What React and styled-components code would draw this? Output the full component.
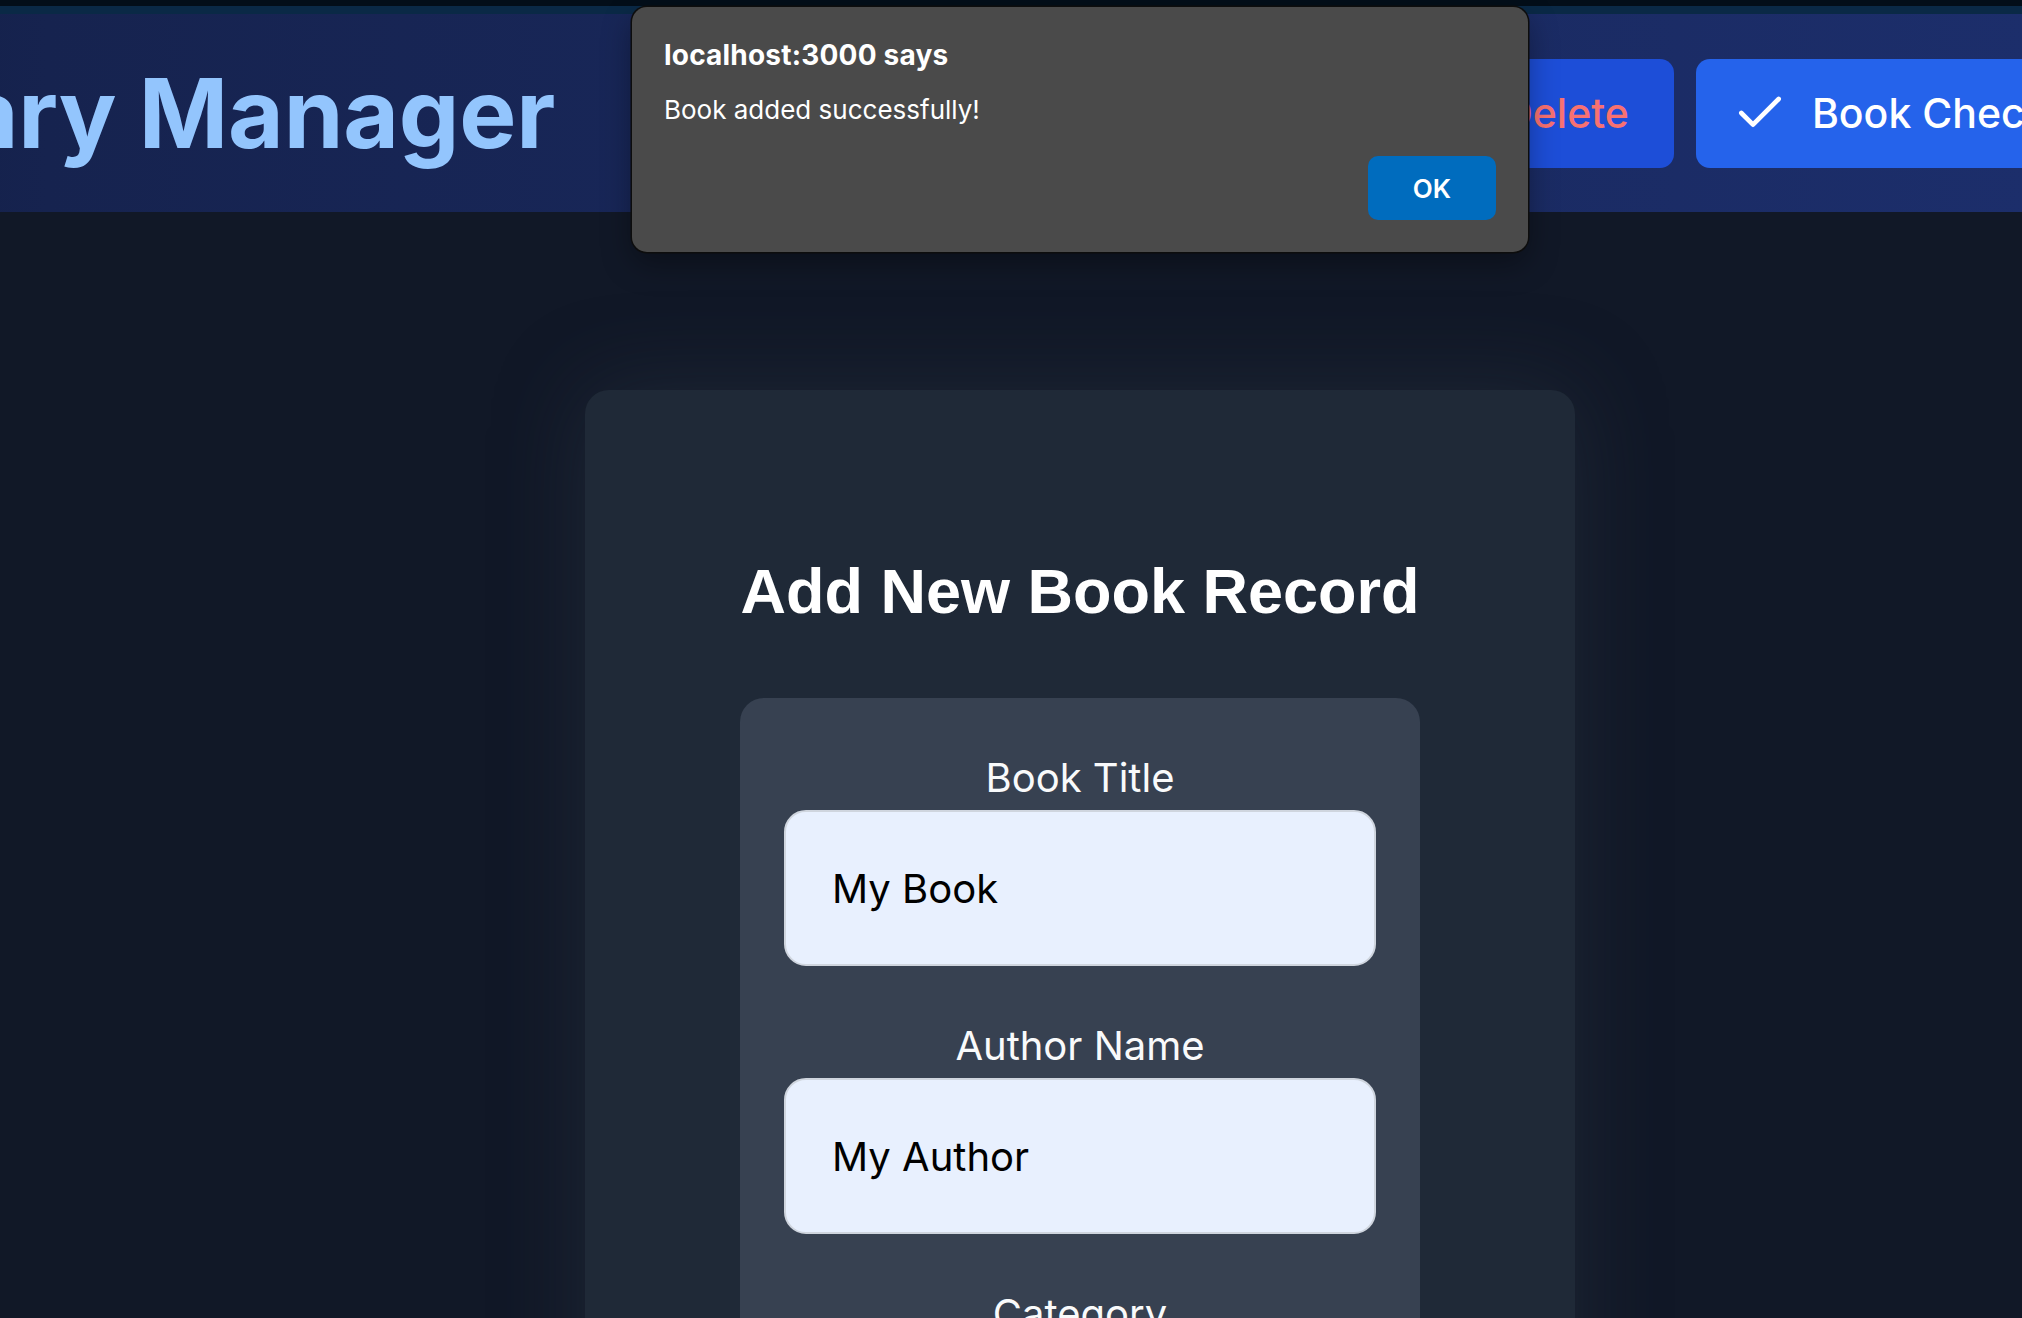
import React from 'react';
import styled, { createGlobalStyle } from 'styled-components';
import { Check, Plus, Pencil, Trash2 } from 'lucide-react';

// the screenshot shows the window scrolled sideways; the page is wider than the view
const SCROLL_X = 279;
const PAGE_WIDTH = 2718;

const GlobalStyle = createGlobalStyle`
  html, body {
    margin: 0;
    padding: 0;
    background: #111827;
    overflow: hidden;
  }
  * {
    box-sizing: border-box;
  }
`;

const Viewport = styled.div`
  width: 2022px;
  height: 1318px;
  overflow: hidden;
`;

const Page = styled.div`
  position: relative;
  width: ${PAGE_WIDTH}px;
  min-height: 1318px;
  margin-left: -${SCROLL_X}px;
  background: #111827;
  font-family: Inter, "Noto Sans", sans-serif;
`;

const TopStrip = styled.div`
  height: 14px;
  background: #0a2946;
  border-top: 6px solid #030e19;
`;

const Header = styled.header`
  display: flex;
  align-items: center;
  gap: 202px;
  height: 198px;
  padding: 0 64px;
  background: linear-gradient(to right, #121d44 0%, #16234f 12%, #1c2e6b 85%, #1e3a8a 100%);
`;

const Title = styled.h1`
  margin: 0;
  flex-shrink: 0;
  font-size: 96px;
  line-height: 1;
  font-weight: 700;
  color: #93c5fd;
  letter-spacing: -0.2px;
`;

const Nav = styled.nav`
  display: flex;
  align-items: center;
  gap: 22px;
`;

const NavButton = styled.button`
  display: flex;
  align-items: center;
  gap: 24px;
  flex-shrink: 0;
  height: 109px;
  padding: 0 45px 0 36px;
  border: none;
  border-radius: 14px;
  background: ${p => (p.$variant === 'danger' ? '#1d4ed8' : '#2563eb')};
  color: ${p => (p.$variant === 'danger' ? '#f87171' : '#ffffff')};
  font-family: Inter, "Noto Sans", sans-serif;
  font-size: 41px;
  font-weight: 500;
  line-height: 56px;
  white-space: nowrap;
`;

const Main = styled.main`
  display: flex;
  justify-content: center;
  padding-top: 178px;
`;

const Card = styled.section`
  width: 990px;
  padding: 165px 0 80px;
  border-radius: 24px;
  background: #1f2937;
  box-shadow: 0 0 90px rgba(55, 65, 81, 0.35);
  display: flex;
  flex-direction: column;
  align-items: center;
`;

const CardTitle = styled.h2`
  margin: 0 0 71px;
  font-family: "Liberation Sans", Arial, sans-serif;
  font-size: 63px;
  font-weight: 700;
  line-height: 72px;
  color: #ffffff;
`;

const Form = styled.form`
  width: 680px;
  padding: 52px 44px 48px;
  border-radius: 24px;
  background: #374151;
  display: flex;
  flex-direction: column;
  gap: 52px;
`;

const Field = styled.div`
  display: flex;
  flex-direction: column;
`;

const Label = styled.label`
  margin-bottom: 4px;
  text-align: center;
  font-size: 40px;
  line-height: 56px;
  font-weight: 400;
  color: #f9fafb;
`;

const Input = styled.input`
  width: 100%;
  height: 156px;
  padding: 0 46px;
  border: 2px solid #cfd5de;
  border-radius: 22px;
  background: ${p => (p.$filled ? '#e8f0fe' : '#ffffff')};
  color: #000000;
  font-family: Inter, "Noto Sans", sans-serif;
  font-size: 40px;
  outline: none;
`;

const Select = styled.select`
  width: 100%;
  height: 156px;
  padding: 0 46px;
  border: 2px solid #cfd5de;
  border-radius: 22px;
  background: #ffffff;
  font-family: Inter, "Noto Sans", sans-serif;
  font-size: 40px;
`;

const Alert = styled.div`
  position: absolute;
  top: 7px;
  left: 50%;
  transform: translateX(-50%);
  width: 896px;
  height: 245px;
  padding: 31px 32px 32px;
  border-radius: 15px;
  background: #4a4a4a;
  box-shadow: 0 0 0 1.5px #0d0d0d, 0 12px 30px rgba(0, 0, 0, 0.35);
  display: flex;
  flex-direction: column;
  z-index: 10;
`;

const AlertTitle = styled.div`
  font-size: 28px;
  line-height: 34px;
  font-weight: 700;
  color: #ffffff;
  letter-spacing: 0.2px;
`;

const AlertMessage = styled.div`
  margin-top: 21px;
  font-size: 26px;
  line-height: 34px;
  color: #ffffff;
`;

const AlertActions = styled.div`
  margin-top: auto;
  display: flex;
  justify-content: flex-end;
`;

const OkButton = styled.button`
  width: 128px;
  height: 64px;
  border: none;
  border-radius: 10px;
  background: #006cbe;
  color: #ffffff;
  font-family: Inter, "Noto Sans", sans-serif;
  font-size: 26px;
  font-weight: 600;
`;

function App() {
  return (
    <Viewport>
      <GlobalStyle />
      <Page>
        <TopStrip />
        <Header>
          <Title>Library Manager</Title>
          <Nav>
            <NavButton><Plus size={56} strokeWidth={2} />Add Book</NavButton>
            <NavButton><Pencil size={56} strokeWidth={2} />Edit</NavButton>
            <NavButton $variant="danger"><Trash2 size={56} strokeWidth={2} />Delete</NavButton>
            <NavButton><Check size={56} strokeWidth={2} />Book Checkout</NavButton>
          </Nav>
        </Header>

        <Main>
          <Card>
            <CardTitle>Add New Book Record</CardTitle>
            <Form onSubmit={e => e.preventDefault()}>
              <Field>
                <Label htmlFor="title">Book Title</Label>
                <Input id="title" $filled defaultValue="My Book" />
              </Field>
              <Field>
                <Label htmlFor="author">Author Name</Label>
                <Input id="author" $filled defaultValue="My Author" />
              </Field>
              <Field>
                <Label htmlFor="category">Category</Label>
                <Select id="category" defaultValue="">
                  <option value="">Select a category</option>
                  <option>Fiction</option>
                  <option>Non-fiction</option>
                </Select>
              </Field>
            </Form>
          </Card>
        </Main>

        <Alert role="alertdialog">
          <AlertTitle>localhost:3000 says</AlertTitle>
          <AlertMessage>Book added successfully!</AlertMessage>
          <AlertActions>
            <OkButton>OK</OkButton>
          </AlertActions>
        </Alert>
      </Page>
    </Viewport>
  );
}

export default App;
